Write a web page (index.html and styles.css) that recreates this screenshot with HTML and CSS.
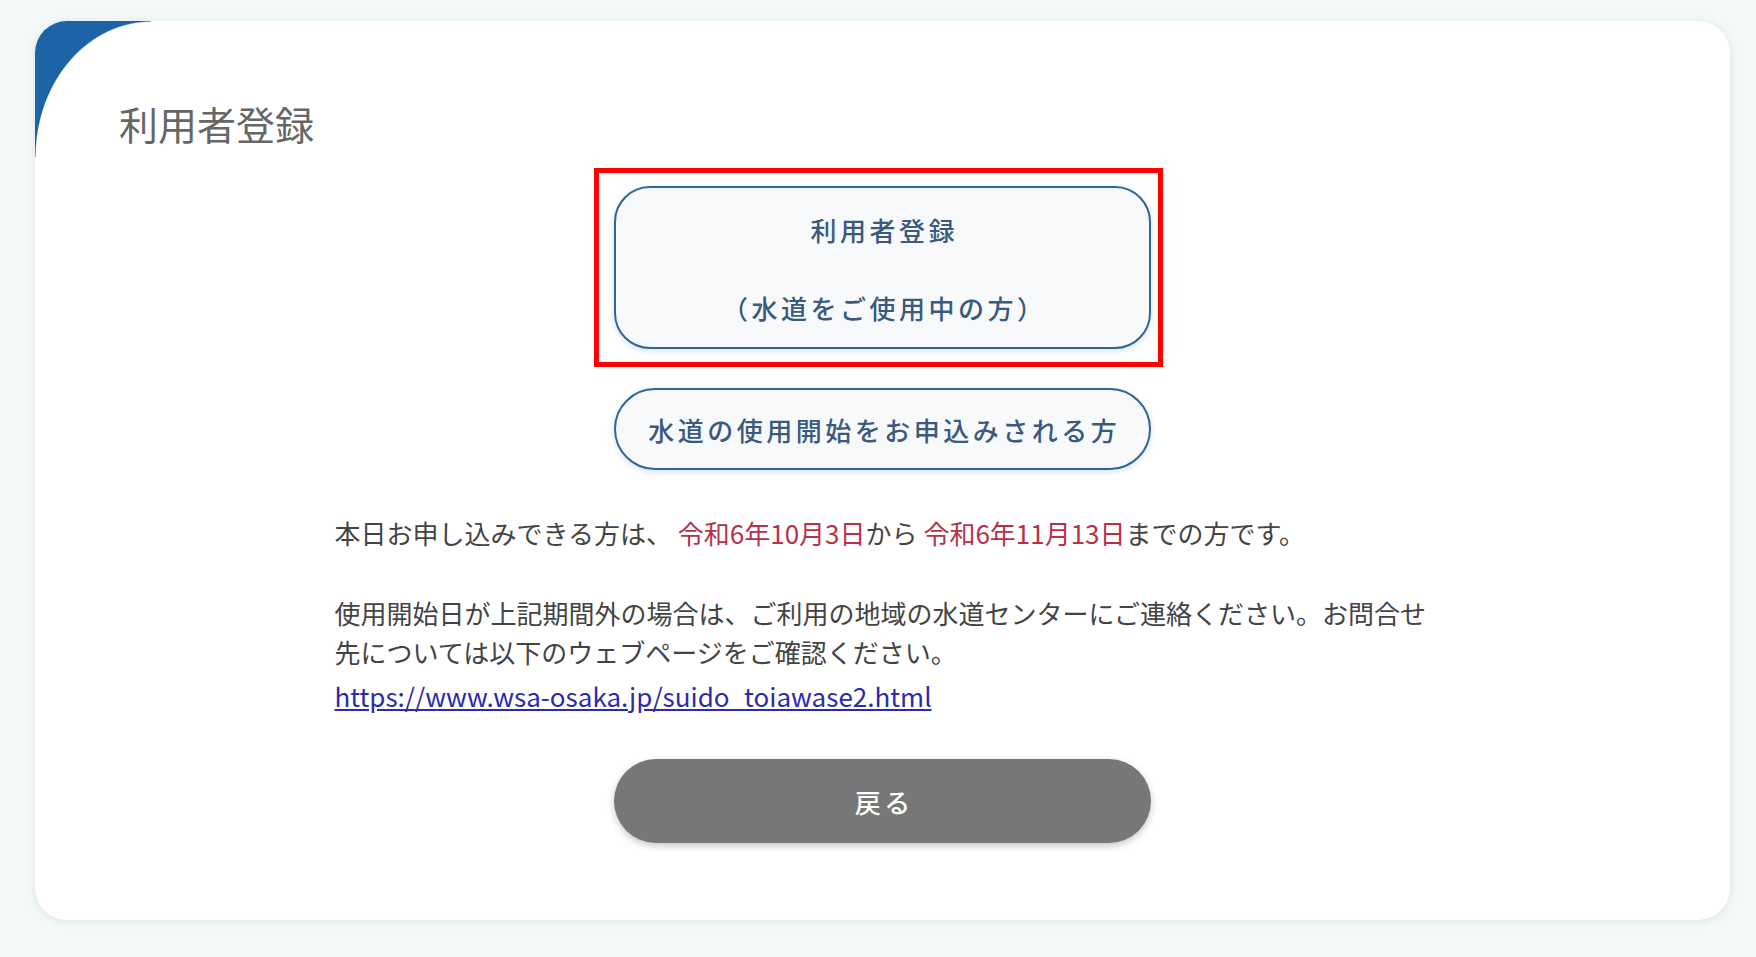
FILE: index.html
```html
<!DOCTYPE html>
<html lang="ja">
<head>
<meta charset="utf-8">
<title>利用者登録</title>
<link rel="stylesheet" href="styles.css">
</head>
<body>
<div class="card">
  <h1 class="title">利用者登録</h1>
  <div class="main">
    <div class="highlight">
      <a class="btn btn-outline btn-tall" href="#">利用者登録<br><br>（水道をご使用中の方）</a>
    </div>
    <a class="btn btn-outline btn-second" href="#">水道の使用開始をお申込みされる方</a>
    <div class="info">
      <p class="para">本日お申し込みできる方は、 <span class="date">令和6年10月3日</span>から <span class="date">令和6年11月13日</span>までの方です。</p>
      <p class="para para-gap">使用開始日が上記期間外の場合は、ご利用の地域の水道センターにご連絡ください。お問合せ先については以下のウェブページをご確認ください。</p>
      <p class="para link-line"><a class="link" href="#">https://www.wsa-osaka.jp/suido_toiawase2.html</a></p>
    </div>
    <a class="btn btn-back" href="#">戻る</a>
  </div>
</div>
</body>
</html>
```

FILE: styles.css
```css
* { box-sizing: border-box; }

html, body {
  margin: 0;
  padding: 0;
}

body {
  background: #f3f8f9;
  font-family: "Noto Sans CJK JP", "Noto Sans", sans-serif;
  color: #444;
  width: 1756px;
  height: 957px;
  overflow: hidden;
}

.card {
  position: relative;
  margin: 21px 0 0 35px;
  width: 1695px;
  background: #ffffff;
  border-radius: 32px;
  box-shadow: 0 1px 10px rgba(0, 0, 0, 0.09);
  overflow: hidden;
  padding: 72px 0 77px 0;
}

.card::before {
  content: "";
  position: absolute;
  top: 0;
  left: 0;
  width: 116px;
  height: 136px;
  background: radial-gradient(ellipse 116px 136px at 116px 136px, rgba(255,255,255,0) 99%, #1d63a7 100%);
}

.title {
  margin: 0;
  padding-left: 84px;
  font-size: 39px;
  line-height: 60px;
  font-weight: 400;
  color: #666666;
}

.main {
  display: flex;
  flex-direction: column;
  align-items: center;
  margin-top: 33px;
}

.highlight {
  position: relative;
}

.highlight::after {
  content: "";
  position: absolute;
  top: -18px;
  left: -20px;
  right: -12px;
  bottom: -18px;
  border: 5px solid #ff0000;
  pointer-events: none;
}

.btn {
  display: block;
  width: 537px;
  text-align: center;
  text-decoration: none;
  font-size: 26px;
  line-height: 39px;
  letter-spacing: 3.5px;
  padding-left: 3.5px;
  font-weight: 500;
}

.btn-outline {
  background: #f8f9fb;
  border: 2px solid #2f6699;
  color: #3a5a7e;
  box-shadow: 0 2px 6px rgba(40, 100, 160, 0.18);
}

.btn-tall {
  border-radius: 36px;
  padding-top: 22px;
  padding-bottom: 20px;
}

.btn-second {
  margin-top: 39px;
  border-radius: 42px;
  padding-top: 20px;
  padding-bottom: 19px;
}

.info {
  width: 1096px;
  margin-top: 43px;
}

.para {
  margin: 0;
  font-size: 26px;
  line-height: 39px;
  color: #444444;
}

.para-gap {
  margin-top: 41px;
}

.date {
  color: #b8304a;
}

.link-line {
  margin-top: 5px;
}

.link {
  color: #2b2bb0;
  text-decoration: underline;
}

.btn-back {
  margin-top: 44px;
  height: 84px;
  border-radius: 42px;
  background: #777777;
  color: #ffffff;
  padding-top: 23px;
  box-shadow: 0 3px 7px rgba(0, 0, 0, 0.22);
}
```
